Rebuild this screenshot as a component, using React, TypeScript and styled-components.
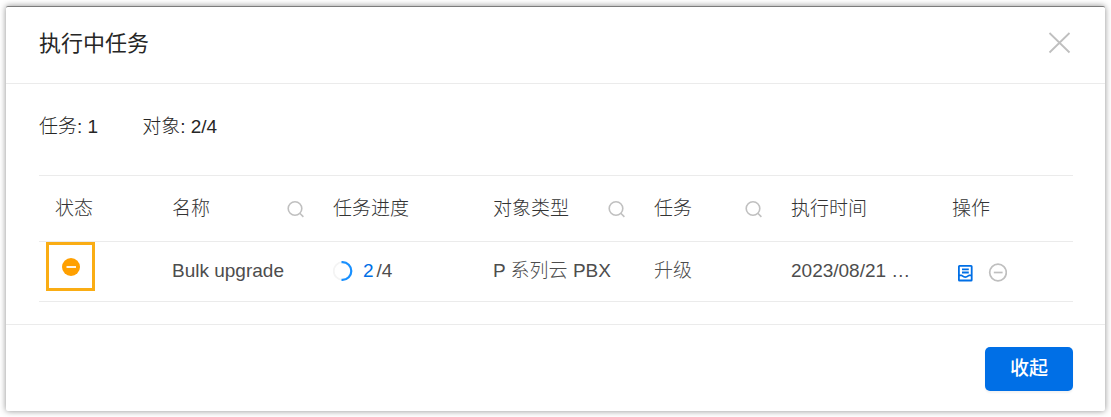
import React from "react";
import styled, { createGlobalStyle } from "styled-components";

const GlobalStyle = createGlobalStyle`
  *, *::before, *::after { box-sizing: border-box; }
  body {
    margin: 0;
    background: #fff;
    color: #262626;
    font-family: "Liberation Sans", "Noto Sans CJK SC", sans-serif;
    font-size: 19px;
    font-weight: 300;
    line-height: 28px;
  }
`;

const Page = styled.div`
  padding: 6px;
`;

const Dialog = styled.section`
  background: #fff;
  border-top: 1px solid #7c7c7c;
  border-radius: 2px;
  box-shadow: 0 0 6px rgba(0, 0, 0, 0.45);
`;

const Header = styled.header`
  display: flex;
  align-items: center;
  justify-content: space-between;
  height: 77px;
  padding: 0 32px 4px 33px;
  border-bottom: 1px solid #ebebeb;
`;

const Title = styled.h1`
  margin: 0;
  padding-top: 2px;
  font-size: 22px;
  font-weight: 400;
  line-height: 32px;
`;

const IconButton = styled.button<{ $color: string }>`
  display: inline-flex;
  padding: 0;
  border: 0;
  background: none;
  color: ${(p) => p.$color};
  cursor: pointer;
`;

const Body = styled.div`
  padding: 29px 32px 22px 33px;
`;

const Summary = styled.div`
  display: flex;
  gap: 44px;
  margin-bottom: 34px;
`;

const TaskTable = styled.table`
  width: 100%;
  table-layout: fixed;
  border-collapse: separate;
  border-spacing: 0;
  color: #333;
`;

const Col = styled.col<{ $width: number }>`
  width: ${(p) => p.$width}px;
`;

const HeadCell = styled.th`
  height: 67px;
  padding: 0 12px 0 16px;
  border-top: 1px solid #ebebeb;
  border-bottom: 1px solid #ebebeb;
  font-weight: 300;
  text-align: left;
  white-space: nowrap;
`;

const HeadContent = styled.div`
  display: flex;
  align-items: center;
  justify-content: space-between;
`;

const Cell = styled.td`
  position: relative;
  height: 60px;
  padding: 0 16px 2px;
  border-bottom: 1px solid #ebebeb;
  color: #4d4d4d;
  overflow: hidden;
  text-overflow: ellipsis;
  white-space: nowrap;
`;

const StatusHighlight = styled.div`
  position: absolute;
  top: 0;
  left: 7px;
  display: flex;
  align-items: center;
  justify-content: center;
  width: 49px;
  height: 49px;
  border: 3px solid #faad14;
`;

const Progress = styled.div`
  display: flex;
  align-items: center;
`;

const Done = styled.span`
  margin: 0 3px 0 10px;
  color: #006fe6;
`;

const Actions = styled.div`
  display: flex;
  align-items: center;
  gap: 14px;
  padding: 4px 0 0 4px;
`;

const Footer = styled.footer`
  display: flex;
  justify-content: flex-end;
  padding: 22px 32px 20px;
  border-top: 1px solid #ebebeb;
`;

const PrimaryButton = styled.button`
  height: 44px;
  padding: 0 25px;
  border: 0;
  border-radius: 5px;
  background: #006fe6;
  box-shadow: 0 2px 2px rgba(0, 0, 0, 0.05);
  color: #fff;
  font: inherit;
  font-weight: 500;
  cursor: pointer;
`;

const CloseIcon = () => (
  <svg width="27" height="22" viewBox="0 0 27 22" fill="none" stroke="currentColor" strokeWidth="1.8" aria-hidden="true">
    <path d="M3.500 1 23.500 20.500M23.500 1 3.500 20.500" />
  </svg>
);

const SearchIcon = () => (
  <svg width="19" height="19" viewBox="0 0 19 19" fill="none" stroke="currentColor" strokeWidth="1.6" aria-hidden="true">
    <circle cx="9" cy="9.5" r="6.8" />
    <path d="m13.8 14.3 3.6 3.6" />
  </svg>
);

const PausedIcon = () => (
  <svg width="18" height="18" viewBox="0 0 18 18" role="img" aria-label="进行中">
    <circle cx="9" cy="9" r="9" fill="#ffa000" />
    <path d="M4.5 9h9.5" stroke="#fff" strokeWidth="1.8" />
  </svg>
);

const ProgressRing = () => (
  <svg width="20" height="20" viewBox="0 0 20 20" fill="none" strokeWidth="2.2" aria-hidden="true">
    <circle cx="9.5" cy="10" r="8.800" stroke="#f4f4f4" strokeWidth="1.800" />
    <path d="M8.500 1.200h1a8.800 8.800 0 0 1 0 17.600h-1" stroke="#1890ff" />
  </svg>
);

const DetailIcon = () => (
  <svg width="18" height="18" viewBox="0 0 18 18" fill="none" stroke="currentColor" strokeWidth="1.8" aria-hidden="true">
    <rect x="2.900" y="1.900" width="12.800" height="14.600" rx="0.600" />
    <path d="M6 5.400h6.800M6 8.500h6.800M3 11.300h2.400c.8 0 1.600 1.800 3.900 1.800s3.100-1.800 3.900-1.800h2.400" />
  </svg>
);

const CancelIcon = () => (
  <svg width="19" height="19" viewBox="0 0 19 19" fill="none" stroke="currentColor" strokeWidth="1.7" aria-hidden="true">
    <circle cx="10" cy="9.500" r="8.300" />
    <path d="M5.800 9.500h8.800" />
  </svg>
);

const columns = [
  { label: "状态", width: 117 },
  { label: "名称", width: 161, search: true },
  { label: "任务进度", width: 160 },
  { label: "对象类型", width: 161, search: true },
  { label: "任务", width: 137, search: true },
  { label: "执行时间", width: 161 },
  { label: "操作", width: 137 },
];

export default function App() {
  return (
    <>
      <GlobalStyle />
      <Page>
        <Dialog role="dialog" aria-labelledby="dialog-title">
          <Header>
            <Title id="dialog-title">执行中任务</Title>
            <IconButton type="button" $color="#bfbfbf" aria-label="关闭">
              <CloseIcon />
            </IconButton>
          </Header>
          <Body>
            <Summary>
              <span>任务: 1</span>
              <span>对象: 2/4</span>
            </Summary>
            <TaskTable>
              <colgroup>
                {columns.map((c) => (
                  <Col key={c.label} $width={c.width} />
                ))}
              </colgroup>
              <thead>
                <tr>
                  {columns.map((c) => (
                    <HeadCell key={c.label} scope="col">
                      <HeadContent>
                        {c.label}
                        {c.search && (
                          <IconButton type="button" $color="#c0c0c0" aria-label={`搜索${c.label}`}>
                            <SearchIcon />
                          </IconButton>
                        )}
                      </HeadContent>
                    </HeadCell>
                  ))}
                </tr>
              </thead>
              <tbody>
                <tr>
                  <Cell>
                    <StatusHighlight>
                      <PausedIcon />
                    </StatusHighlight>
                  </Cell>
                  <Cell>Bulk upgrade</Cell>
                  <Cell>
                    <Progress>
                      <ProgressRing />
                      <Done>2</Done>/4
                    </Progress>
                  </Cell>
                  <Cell>P 系列云 PBX</Cell>
                  <Cell>升级</Cell>
                  <Cell>2023/08/21 …</Cell>
                  <Cell>
                    <Actions>
                      <IconButton type="button" $color="#006fe6" aria-label="详情">
                        <DetailIcon />
                      </IconButton>
                      <IconButton type="button" $color="#bfbfbf" aria-label="取消">
                        <CancelIcon />
                      </IconButton>
                    </Actions>
                  </Cell>
                </tr>
              </tbody>
            </TaskTable>
          </Body>
          <Footer>
            <PrimaryButton type="button">收起</PrimaryButton>
          </Footer>
        </Dialog>
      </Page>
    </>
  );
}
